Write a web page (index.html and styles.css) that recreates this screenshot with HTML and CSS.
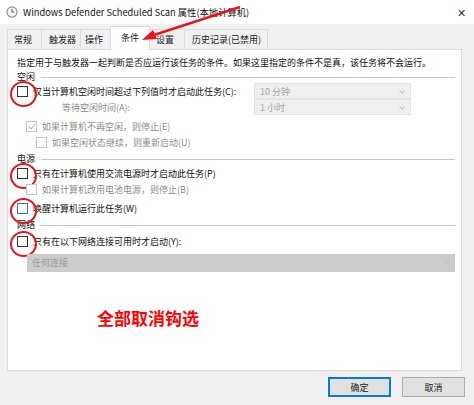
FILE: index.html
```html
<!DOCTYPE html>
<html lang="zh-CN">

<head>
  <meta charset="UTF-8">
  <title>任务属性</title>
  <link rel="stylesheet" href="styles.css">
</head>

<body>
  <div class="window">
    <div class="titlebar">
      <svg class="app-icon" width="12" height="12" viewBox="0 0 13 13">
        <circle cx="6.5" cy="6.5" r="5.5" fill="#f4f4f4" stroke="#8a8a8a" stroke-width="1.2" />
        <path d="M6.5 3.2V6.6H9" fill="none" stroke="#5a5a5a" stroke-width="1.1" />
      </svg>
      <span class="title">Windows Defender Scheduled Scan 属性(本地计算机)</span>
      <span class="close">✕</span>
    </div>

    <div class="tabs">
      <div class="tab">常规</div>
      <div class="tab">触发器</div>
      <div class="tab">操作</div>
      <div class="tab active">条件</div>
      <div class="tab">设置</div>
      <div class="tab">历史记录(已禁用)</div>
    </div>

    <div class="panel">
      <div class="desc">指定用于与触发器一起判断是否应运行该任务的条件。如果这里指定的条件不是真，该任务将不会运行。</div>

      <div class="group">空闲</div>
      <div class="row">
        <span class="check marked"></span>
        <span class="label">仅当计算机空闲时间超过下列值时才启动此任务(C):</span>
        <div class="select">10 分钟<i></i></div>
      </div>
      <div class="row">
        <span class="label muted indent-wait">等待空闲时间(A):</span>
        <div class="select">1 小时<i></i></div>
      </div>
      <div class="row lv1 gap">
        <span class="check disabled checked"></span>
        <span class="label muted">如果计算机不再空闲，则停止(E)</span>
      </div>
      <div class="row lv2">
        <span class="check disabled"></span>
        <span class="label muted">如果空闲状态继续，则重新启动(U)</span>
      </div>

      <div class="group spaced">电源</div>
      <div class="row">
        <span class="check marked"></span>
        <span class="label">只有在计算机使用交流电源时才启动此任务(P)</span>
      </div>
      <div class="row lv1">
        <span class="check disabled"></span>
        <span class="label muted">如果计算机改用电池电源，则停止(B)</span>
      </div>
      <div class="row gap">
        <span class="check marked blue"></span>
        <span class="label">唤醒计算机运行此任务(W)</span>
      </div>

      <div class="group spaced">网络</div>
      <div class="row after-net">
        <span class="check marked"></span>
        <span class="label">只有在以下网络连接可用时才启动(Y):</span>
      </div>
      <div class="net-select">任何连接<i></i></div>

      <div class="note">全部取消钩选</div>
    </div>

    <div class="footer">
      <button class="btn default">确定</button>
      <button class="btn">取消</button>
    </div>

    <!-- annotation arrow pointing at the conditions tab -->
    <svg class="arrow" width="474" height="60" viewBox="0 0 474 60">
      <line x1="240" y1="7" x2="154" y2="35" stroke="#e8141c" stroke-width="2.4" />
      <path d="M142 40 L153 30 L157 39 Z" fill="#e8141c" />
    </svg>
  </div>
</body>

</html>
```

FILE: styles.css
```css
* {
  box-sizing: border-box;
}

body {
  margin: 0;
  background: #f0f0f0;
  font-family: "Noto Sans CJK SC", "Noto Sans", sans-serif;
  font-size: 9px;
  color: #111;
}

.window {
  position: relative;
  width: 474px;
  height: 405px;
  background: #f0f0f0;
}

.titlebar {
  display: flex;
  align-items: center;
  height: 24px;
  padding-left: 6px;
  background: #fff;
}

.app-icon {
  flex: none;
}

.title {
  margin-left: 5px;
  font-size: 9.3px;
  color: #111;
}

.close {
  margin-left: auto;
  margin-right: 8px;
  font-size: 11px;
  color: #333;
}

.tabs {
  display: flex;
  align-items: flex-end;
  height: 25px;
  padding-left: 7px;
}

.tab {
  height: 20px;
  line-height: 19px;
  border: 1px solid #dcdcdc;
  border-bottom: none;
  margin-right: -1px;
  background: #f0f0f0;
  color: #222;
  white-space: nowrap;
}

.tab:nth-child(1) { width: 35px; padding-left: 6px; }
.tab:nth-child(2) { width: 40px; padding-left: 7px; }
.tab:nth-child(3) { width: 31px; padding-left: 4px; }
.tab:nth-child(4) { width: 40px; padding-left: 10px; }
.tab:nth-child(5) { width: 36px; padding-left: 6px; }
.tab:nth-child(6) { width: 84px; padding-left: 7px; }

.tab.active {
  position: relative;
  z-index: 1;
  height: 24px;
  margin-bottom: -1px;
  line-height: 22px;
  background: #fff;
}

.panel {
  height: 322px;
  margin: 0 12px 0 7px;
  padding: 6px 6px 0 9px;
  background: #fff;
  border: 1px solid #dcdcdc;
}

.desc {
  height: 14px;
  line-height: 14px;
  white-space: nowrap;
}

.group {
  display: flex;
  align-items: center;
  height: 13px;
}

.group.spaced {
  margin-top: 2px;
}

.group::after {
  content: '';
  flex: 1;
  height: 1px;
  margin-left: 6px;
  margin-top: 2px;
  background: #c8c8c8;
}

.row {
  position: relative;
  display: flex;
  align-items: center;
  height: 16px;
}

.row.gap {
  margin-top: 3px;
}

.row.after-net {
  margin-top: 2px;
}

.lv1 {
  padding-left: 9px;
}

.lv2 {
  padding-left: 19px;
}

.indent-wait {
  padding-left: 45px;
}

.check {
  position: relative;
  flex: none;
  width: 11px;
  height: 11px;
  border: 1px solid #333;
  background: #fff;
  margin-right: 5px;
}

.check.blue {
  border-color: #2a7ad5;
}

.check.disabled {
  border-color: #c6c6c6;
}

.check.checked::before {
  content: '';
  position: absolute;
  left: 3px;
  top: 0;
  width: 3px;
  height: 6px;
  border: solid #b8b8b8;
  border-width: 0 1.5px 1.5px 0;
  transform: rotate(40deg);
}

/* red circle marks drawn over the checkboxes */
.check.marked::after {
  content: '';
  position: absolute;
  left: -8px;
  top: -6px;
  width: 23px;
  height: 22px;
  border: 2.5px solid #e8141c;
  border-radius: 50%;
}

.label {
  white-space: nowrap;
}

.muted {
  color: #8c8c8c;
}

.select {
  position: absolute;
  left: 237px;
  top: 0;
  width: 157px;
  height: 16px;
  padding-left: 5px;
  line-height: 15px;
  background: #efefef;
  border: 1px solid #e4e4e4;
  color: #a8a8a8;
}

.select i,
.net-select i {
  position: absolute;
  right: 6px;
  top: 5px;
  width: 4px;
  height: 4px;
  border: solid #c4c4c4;
  border-width: 0 1px 1px 0;
  transform: rotate(45deg);
}

.net-select {
  position: relative;
  height: 18px;
  margin: 5px 0 0 10px;
  padding-left: 5px;
  line-height: 18px;
  background: #cccccc;
  color: #9a9a9a;
}

.note {
  margin-top: 33px;
  padding-left: 80px;
  font-size: 17px;
  font-weight: bold;
  color: #ff0000;
}

.footer {
  display: flex;
  justify-content: flex-end;
  gap: 11px;
  padding: 6px 9px 0 0;
}

.btn {
  width: 63px;
  height: 20px;
  padding: 0;
  font-family: inherit;
  font-size: 9px;
  color: #222;
  background: #e1e1e1;
  border: 1px solid #adadad;
}

.btn.default {
  border: 2px solid #0a78d7;
}

.arrow {
  position: absolute;
  left: 0;
  top: 0;
  z-index: 5;
  pointer-events: none;
}
```
